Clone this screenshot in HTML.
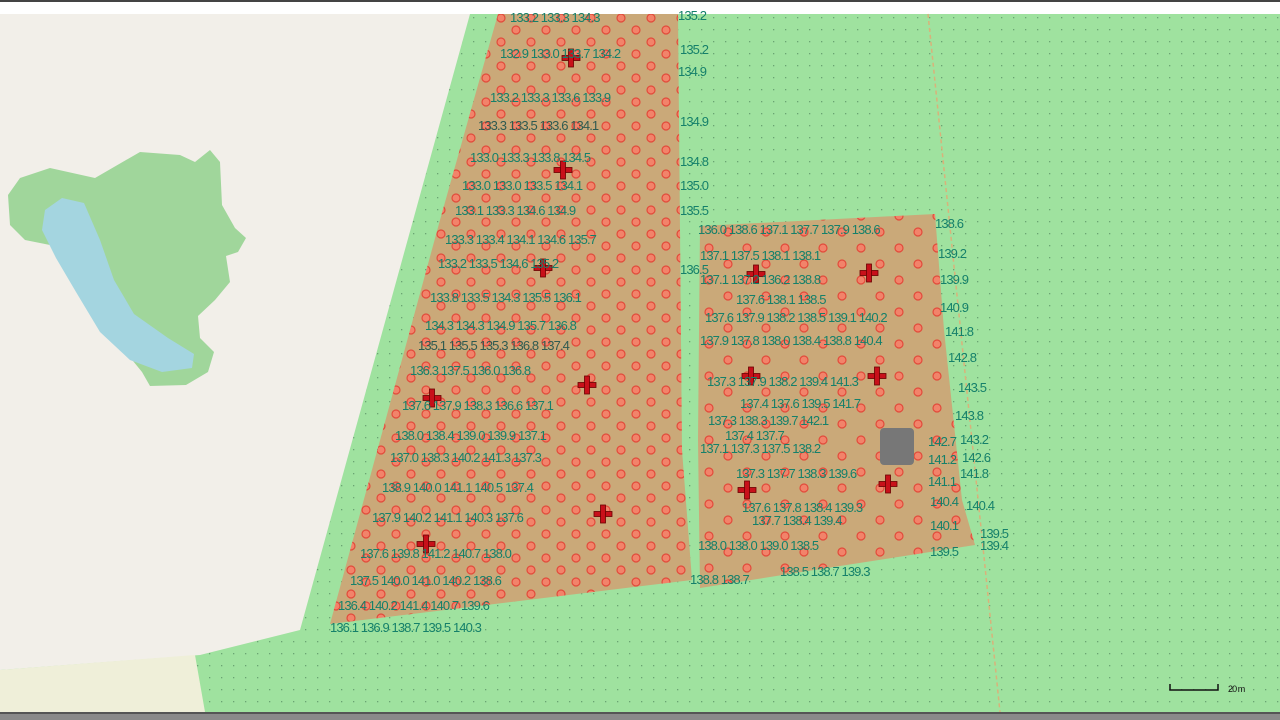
<!DOCTYPE html>
<html><head><meta charset="utf-8"><style>
html,body{margin:0;padding:0;width:1280px;height:720px;overflow:hidden;background:#fff}
svg{display:block}
text{font-family:"Liberation Sans",sans-serif;font-size:13px;fill:#15806a;letter-spacing:-0.9px}
.d{fill:#2f5a50}
</style></head><body>
<svg width="1280" height="720" viewBox="0 0 1280 720">
<defs>
<pattern id="g" width="12" height="12" patternUnits="userSpaceOnUse"><rect width="12" height="12" fill="#9fe29f"/><rect x="5" y="5" width="1.3" height="1.3" fill="#6aa472"/></pattern>
<pattern id="c" width="30" height="24" patternUnits="userSpaceOnUse"><circle cx="6" cy="6" r="4" fill="#f2836a" stroke="#e24a3a" stroke-width="1.2"/><circle cx="21" cy="18" r="4" fill="#f2836a" stroke="#e24a3a" stroke-width="1.2"/></pattern>
<pattern id="c2" width="38" height="32" patternUnits="userSpaceOnUse"><circle cx="6" cy="8" r="4" fill="#f2836a" stroke="#e24a3a" stroke-width="1.2"/><circle cx="25" cy="24" r="4" fill="#f2836a" stroke="#e24a3a" stroke-width="1.2"/></pattern>
<g id="x"><rect x="-9" y="-2.5" width="18" height="5" fill="#c8101a" stroke="#6a0000" stroke-width="0.8"/><rect x="-2.5" y="-9" width="5" height="18" fill="#c8101a" stroke="#6a0000" stroke-width="0.8"/></g>
</defs>
<rect width="1280" height="720" fill="url(#g)"/>
<rect x="0" y="0" width="1280" height="2" fill="#444"/>
<rect x="0" y="2" width="1280" height="12" fill="#fff"/>
<polygon points="0,14 470,14 300,630 200,655 0,670" fill="#f2efe9"/>
<polygon points="0,670 195,655 205,712 0,712" fill="#efefd9"/>
<polygon points="8,195 20,178 50,168 95,178 140,152 180,155 195,162 210,150 220,162 222,205 235,228 246,238 238,252 226,256 230,282 215,300 198,316 200,338 214,352 208,372 186,385 150,386 142,372 120,345 90,310 70,270 50,245 25,240 10,225" fill="#a0d69b"/>
<polygon points="45,210 62,198 84,203 100,240 114,280 134,314 168,338 194,354 192,368 162,372 130,360 100,332 76,292 56,258 42,230" fill="#a4d5e0"/>
<polygon points="498,14 678,14 680,230 682,450 692,580 330,624 440,220" fill="#caa979"/>
<polygon points="700,226 935,214 944,330 962,500 975,545 840,566 700,588 698,440" fill="#caa979"/>
<polygon points="498,14 678,14 680,230 682,450 692,580 330,624 440,220" fill="url(#c)"/>
<polygon points="700,226 935,214 944,330 962,500 975,545 840,566 700,588 698,440" fill="url(#c2)"/>
<line x1="928" y1="14" x2="1000" y2="712" stroke="#d9b27a" stroke-width="1.5" stroke-dasharray="4,3"/>
<rect x="880" y="428" width="34" height="37" rx="4" fill="#777"/>
<use href="#x" x="571" y="58"/><use href="#x" x="563" y="170"/><use href="#x" x="543" y="268"/><use href="#x" x="587" y="385"/><use href="#x" x="432" y="398"/><use href="#x" x="603" y="514"/><use href="#x" x="426" y="544"/><use href="#x" x="756" y="274"/><use href="#x" x="869" y="273"/><use href="#x" x="751" y="376"/><use href="#x" x="877" y="376"/><use href="#x" x="747" y="490"/><use href="#x" x="888" y="484"/>
<g>
<text x="510" y="22">133.2 133.3 134.3</text><text x="678" y="20">135.2</text>
<text x="500" y="58">132.9 133.0 133.7 134.2</text><text x="680" y="54">135.2</text>
<text x="490" y="102">133.2 133.3 133.6 133.9</text><text x="678" y="76">134.9</text>
<text x="478" y="130" class="d">133.3 133.5 133.6 134.1</text><text x="680" y="126">134.9</text>
<text x="470" y="162">133.0 133.3 133.8 134.5</text><text x="680" y="166">134.8</text>
<text x="462" y="190">133.0 133.0 133.5 134.1</text><text x="680" y="190">135.0</text>
<text x="455" y="215">133.1 133.3 134.6 134.9</text><text x="680" y="215">135.5</text>
<text x="445" y="244">133.3 133.4 134.1 134.6 135.7</text>
<text x="438" y="268">133.2 133.5 134.6 135.2</text><text x="680" y="274">136.5</text>
<text x="430" y="302">133.8 133.5 134.3 135.5 136.1</text>
<text x="425" y="330">134.3 134.3 134.9 135.7 136.8</text>
<text x="418" y="350" class="d">135.1 135.5 135.3 136.8 137.4</text>
<text x="410" y="375">136.3 137.5 136.0 136.8</text>
<text x="402" y="410">137.6 137.9 138.3 136.6 137.1</text>
<text x="395" y="440">138.0 138.4 139.0 139.9 137.1</text>
<text x="390" y="462">137.0 138.3 140.2 141.3 137.3</text>
<text x="382" y="492">138.9 140.0 141.1 140.5 137.4</text>
<text x="372" y="522">137.9 140.2 141.1 140.3 137.6</text>
<text x="360" y="558">137.6 139.8 141.2 140.7 138.0</text>
<text x="350" y="585">137.5 140.0 141.0 140.2 138.6</text>
<text x="338" y="610">136.4 140.2 141.4 140.7 139.6</text>
<text x="330" y="632">136.1 136.9 138.7 139.5 140.3</text>
<text x="698" y="234">136.0 138.6 137.1 137.7 137.9 138.6</text><text x="935" y="228">138.6</text>
<text x="700" y="260">137.1 137.5 138.1 138.1</text><text x="938" y="258">139.2</text>
<text x="700" y="284">137.1 137.2 136.2 138.8</text><text x="940" y="284">139.9</text>
<text x="736" y="304">137.6 138.1 138.5</text><text x="940" y="312">140.9</text>
<text x="705" y="322">137.6 137.9 138.2 138.5 139.1 140.2</text>
<text x="700" y="345">137.9 137.8 138.0 138.4 138.8 140.4</text><text x="945" y="336">141.8</text>
<text x="707" y="386">137.3 137.9 138.2 139.4 141.3</text><text x="948" y="362">142.8</text>
<text x="740" y="408">137.4 137.6 139.5 141.7</text><text x="958" y="392">143.5</text>
<text x="708" y="425">137.3 138.3 139.7 142.1</text><text x="955" y="420">143.8</text>
<text x="725" y="440">137.4 137.7</text><text x="960" y="444">143.2</text>
<text x="700" y="453">137.1 137.3 137.5 138.2</text><text x="928" y="446">142.7</text>
<text x="962" y="462">142.6</text><text x="928" y="464">141.2</text>
<text x="960" y="478">141.8</text>
<text x="736" y="478">137.3 137.7 138.3 139.6</text><text x="928" y="486">141.1</text>
<text x="742" y="512">137.6 137.8 138.4 139.3</text><text x="930" y="506">140.4</text><text x="966" y="510">140.4</text>
<text x="752" y="525">137.7 138.4 139.4</text><text x="930" y="530">140.1</text><text x="980" y="538">139.5</text>
<text x="698" y="550">138.0 138.0 139.0 138.5</text><text x="930" y="556">139.5</text><text x="980" y="550">139.4</text>
<text x="780" y="576">138.5 138.7 139.3</text>
<text x="690" y="584">138.8 138.7</text>
</g>
<path d="M1170,684 V690 H1218 V684" fill="none" stroke="#111" stroke-width="1.5"/>
<text x="1228" y="692" style="fill:#111;font-size:9px">20 m</text>
<rect x="0" y="712" width="1280" height="8" fill="#8a8a8a"/>
<rect x="0" y="712" width="1280" height="2" fill="#555"/>
</svg>
</body></html>
